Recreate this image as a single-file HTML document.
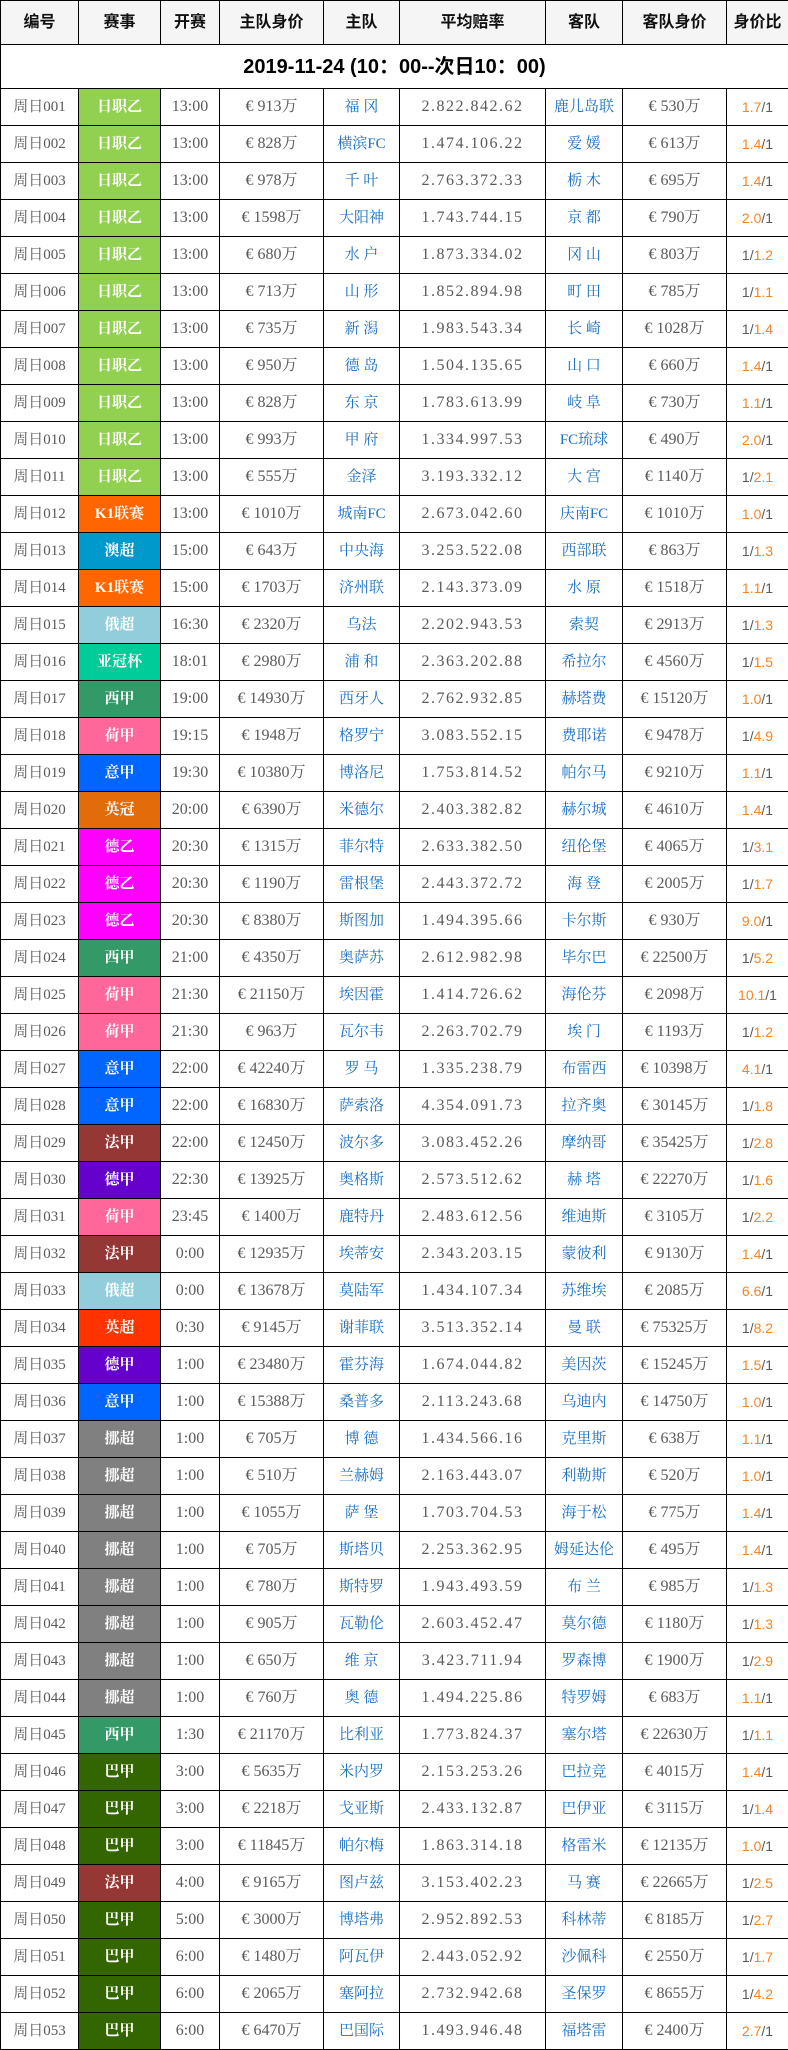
<!DOCTYPE html>
<html><head><meta charset="utf-8"><style>
body{margin:0;background:#fff;}
table{border-collapse:collapse;table-layout:fixed;width:788px;font-family:"Liberation Serif","Noto Serif CJK SC",serif;font-size:16px;}
td,th{border:1px solid #000;text-align:center;padding:0;height:36px;color:#5a5a5a;white-space:nowrap;overflow:hidden;line-height:20px;vertical-align:middle;}
th{height:43px;background:#f5f5f5;font-family:"Liberation Sans","Noto Sans CJK SC",sans-serif;font-weight:bold;color:#111;font-size:16px;}
tr.t td{height:43px;font-family:"Liberation Sans","Noto Sans CJK SC",sans-serif;font-weight:bold;color:#000;font-size:20px;}
td:nth-child(2){color:#fff;font-weight:bold;font-size:15px;}
td:nth-child(5),td:nth-child(7){color:#1a6fc4;font-size:15px;}
td:nth-child(6){letter-spacing:1.5px;font-size:16px;}
td:nth-child(9){font-family:"Liberation Sans",sans-serif;font-size:14px;}
td:nth-child(1){font-size:15px;}
b{font-weight:normal;color:#f7841f;}
.a{background:#92d050}.k{background:#ff6600}.au{background:#0099cc}.r{background:#92cddc}.y{background:#00cc99}
.x{background:#339966}.h{background:#ff6699}.i{background:#0066ff}.e{background:#e26b0a}.d2{background:#ff00ff}
.f{background:#953735}.d1{background:#6600cc}.p{background:#ff3300}.n{background:#808080}.b{background:#336600}
</style></head><body>
<table>
<colgroup><col style="width:78px"><col style="width:82px"><col style="width:59px"><col style="width:104px"><col style="width:76px"><col style="width:146px"><col style="width:77px"><col style="width:104px"><col style="width:62px"></colgroup>
<tr><th>编号</th><th>赛事</th><th>开赛</th><th>主队身价</th><th>主队</th><th>平均赔率</th><th>客队</th><th>客队身价</th><th>身价比</th></tr>
<tr class="t"><td colspan="9">2019-11-24 (10：00--次日10：00)</td></tr>
<tr><td>周日001</td><td class="a">日职乙</td><td>13:00</td><td>€ 913万</td><td>福 冈</td><td>2.822.842.62</td><td>鹿儿岛联</td><td>€ 530万</td><td><b>1.7</b>/1</td></tr>
<tr><td>周日002</td><td class="a">日职乙</td><td>13:00</td><td>€ 828万</td><td>横滨FC</td><td>1.474.106.22</td><td>爱 媛</td><td>€ 613万</td><td><b>1.4</b>/1</td></tr>
<tr><td>周日003</td><td class="a">日职乙</td><td>13:00</td><td>€ 978万</td><td>千 叶</td><td>2.763.372.33</td><td>栃 木</td><td>€ 695万</td><td><b>1.4</b>/1</td></tr>
<tr><td>周日004</td><td class="a">日职乙</td><td>13:00</td><td>€ 1598万</td><td>大阳神</td><td>1.743.744.15</td><td>京 都</td><td>€ 790万</td><td><b>2.0</b>/1</td></tr>
<tr><td>周日005</td><td class="a">日职乙</td><td>13:00</td><td>€ 680万</td><td>水 户</td><td>1.873.334.02</td><td>冈 山</td><td>€ 803万</td><td>1/<b>1.2</b></td></tr>
<tr><td>周日006</td><td class="a">日职乙</td><td>13:00</td><td>€ 713万</td><td>山 形</td><td>1.852.894.98</td><td>町 田</td><td>€ 785万</td><td>1/<b>1.1</b></td></tr>
<tr><td>周日007</td><td class="a">日职乙</td><td>13:00</td><td>€ 735万</td><td>新 潟</td><td>1.983.543.34</td><td>长 崎</td><td>€ 1028万</td><td>1/<b>1.4</b></td></tr>
<tr><td>周日008</td><td class="a">日职乙</td><td>13:00</td><td>€ 950万</td><td>德 岛</td><td>1.504.135.65</td><td>山 口</td><td>€ 660万</td><td><b>1.4</b>/1</td></tr>
<tr><td>周日009</td><td class="a">日职乙</td><td>13:00</td><td>€ 828万</td><td>东 京</td><td>1.783.613.99</td><td>岐 阜</td><td>€ 730万</td><td><b>1.1</b>/1</td></tr>
<tr><td>周日010</td><td class="a">日职乙</td><td>13:00</td><td>€ 993万</td><td>甲 府</td><td>1.334.997.53</td><td>FC琉球</td><td>€ 490万</td><td><b>2.0</b>/1</td></tr>
<tr><td>周日011</td><td class="a">日职乙</td><td>13:00</td><td>€ 555万</td><td>金泽</td><td>3.193.332.12</td><td>大 宫</td><td>€ 1140万</td><td>1/<b>2.1</b></td></tr>
<tr><td>周日012</td><td class="k">K1联赛</td><td>13:00</td><td>€ 1010万</td><td>城南FC</td><td>2.673.042.60</td><td>庆南FC</td><td>€ 1010万</td><td><b>1.0</b>/1</td></tr>
<tr><td>周日013</td><td class="au">澳超</td><td>15:00</td><td>€ 643万</td><td>中央海</td><td>3.253.522.08</td><td>西部联</td><td>€ 863万</td><td>1/<b>1.3</b></td></tr>
<tr><td>周日014</td><td class="k">K1联赛</td><td>15:00</td><td>€ 1703万</td><td>济州联</td><td>2.143.373.09</td><td>水 原</td><td>€ 1518万</td><td><b>1.1</b>/1</td></tr>
<tr><td>周日015</td><td class="r">俄超</td><td>16:30</td><td>€ 2320万</td><td>乌法</td><td>2.202.943.53</td><td>索契</td><td>€ 2913万</td><td>1/<b>1.3</b></td></tr>
<tr><td>周日016</td><td class="y">亚冠杯</td><td>18:01</td><td>€ 2980万</td><td>浦 和</td><td>2.363.202.88</td><td>希拉尔</td><td>€ 4560万</td><td>1/<b>1.5</b></td></tr>
<tr><td>周日017</td><td class="x">西甲</td><td>19:00</td><td>€ 14930万</td><td>西牙人</td><td>2.762.932.85</td><td>赫塔费</td><td>€ 15120万</td><td><b>1.0</b>/1</td></tr>
<tr><td>周日018</td><td class="h">荷甲</td><td>19:15</td><td>€ 1948万</td><td>格罗宁</td><td>3.083.552.15</td><td>费耶诺</td><td>€ 9478万</td><td>1/<b>4.9</b></td></tr>
<tr><td>周日019</td><td class="i">意甲</td><td>19:30</td><td>€ 10380万</td><td>博洛尼</td><td>1.753.814.52</td><td>帕尔马</td><td>€ 9210万</td><td><b>1.1</b>/1</td></tr>
<tr><td>周日020</td><td class="e">英冠</td><td>20:00</td><td>€ 6390万</td><td>米德尔</td><td>2.403.382.82</td><td>赫尔城</td><td>€ 4610万</td><td><b>1.4</b>/1</td></tr>
<tr><td>周日021</td><td class="d2">德乙</td><td>20:30</td><td>€ 1315万</td><td>菲尔特</td><td>2.633.382.50</td><td>纽伦堡</td><td>€ 4065万</td><td>1/<b>3.1</b></td></tr>
<tr><td>周日022</td><td class="d2">德乙</td><td>20:30</td><td>€ 1190万</td><td>雷根堡</td><td>2.443.372.72</td><td>海 登</td><td>€ 2005万</td><td>1/<b>1.7</b></td></tr>
<tr><td>周日023</td><td class="d2">德乙</td><td>20:30</td><td>€ 8380万</td><td>斯图加</td><td>1.494.395.66</td><td>卡尔斯</td><td>€ 930万</td><td><b>9.0</b>/1</td></tr>
<tr><td>周日024</td><td class="x">西甲</td><td>21:00</td><td>€ 4350万</td><td>奥萨苏</td><td>2.612.982.98</td><td>毕尔巴</td><td>€ 22500万</td><td>1/<b>5.2</b></td></tr>
<tr><td>周日025</td><td class="h">荷甲</td><td>21:30</td><td>€ 21150万</td><td>埃因霍</td><td>1.414.726.62</td><td>海伦芬</td><td>€ 2098万</td><td><b>10.1</b>/1</td></tr>
<tr><td>周日026</td><td class="h">荷甲</td><td>21:30</td><td>€ 963万</td><td>瓦尔韦</td><td>2.263.702.79</td><td>埃 门</td><td>€ 1193万</td><td>1/<b>1.2</b></td></tr>
<tr><td>周日027</td><td class="i">意甲</td><td>22:00</td><td>€ 42240万</td><td>罗 马</td><td>1.335.238.79</td><td>布雷西</td><td>€ 10398万</td><td><b>4.1</b>/1</td></tr>
<tr><td>周日028</td><td class="i">意甲</td><td>22:00</td><td>€ 16830万</td><td>萨索洛</td><td>4.354.091.73</td><td>拉齐奥</td><td>€ 30145万</td><td>1/<b>1.8</b></td></tr>
<tr><td>周日029</td><td class="f">法甲</td><td>22:00</td><td>€ 12450万</td><td>波尔多</td><td>3.083.452.26</td><td>摩纳哥</td><td>€ 35425万</td><td>1/<b>2.8</b></td></tr>
<tr><td>周日030</td><td class="d1">德甲</td><td>22:30</td><td>€ 13925万</td><td>奥格斯</td><td>2.573.512.62</td><td>赫 塔</td><td>€ 22270万</td><td>1/<b>1.6</b></td></tr>
<tr><td>周日031</td><td class="h">荷甲</td><td>23:45</td><td>€ 1400万</td><td>鹿特丹</td><td>2.483.612.56</td><td>维迪斯</td><td>€ 3105万</td><td>1/<b>2.2</b></td></tr>
<tr><td>周日032</td><td class="f">法甲</td><td>0:00</td><td>€ 12935万</td><td>埃蒂安</td><td>2.343.203.15</td><td>蒙彼利</td><td>€ 9130万</td><td><b>1.4</b>/1</td></tr>
<tr><td>周日033</td><td class="r">俄超</td><td>0:00</td><td>€ 13678万</td><td>莫陆军</td><td>1.434.107.34</td><td>苏维埃</td><td>€ 2085万</td><td><b>6.6</b>/1</td></tr>
<tr><td>周日034</td><td class="p">英超</td><td>0:30</td><td>€ 9145万</td><td>谢菲联</td><td>3.513.352.14</td><td>曼 联</td><td>€ 75325万</td><td>1/<b>8.2</b></td></tr>
<tr><td>周日035</td><td class="d1">德甲</td><td>1:00</td><td>€ 23480万</td><td>霍芬海</td><td>1.674.044.82</td><td>美因茨</td><td>€ 15245万</td><td><b>1.5</b>/1</td></tr>
<tr><td>周日036</td><td class="i">意甲</td><td>1:00</td><td>€ 15388万</td><td>桑普多</td><td>2.113.243.68</td><td>乌迪内</td><td>€ 14750万</td><td><b>1.0</b>/1</td></tr>
<tr><td>周日037</td><td class="n">挪超</td><td>1:00</td><td>€ 705万</td><td>博 德</td><td>1.434.566.16</td><td>克里斯</td><td>€ 638万</td><td><b>1.1</b>/1</td></tr>
<tr><td>周日038</td><td class="n">挪超</td><td>1:00</td><td>€ 510万</td><td>兰赫姆</td><td>2.163.443.07</td><td>利勒斯</td><td>€ 520万</td><td><b>1.0</b>/1</td></tr>
<tr><td>周日039</td><td class="n">挪超</td><td>1:00</td><td>€ 1055万</td><td>萨 堡</td><td>1.703.704.53</td><td>海于松</td><td>€ 775万</td><td><b>1.4</b>/1</td></tr>
<tr><td>周日040</td><td class="n">挪超</td><td>1:00</td><td>€ 705万</td><td>斯塔贝</td><td>2.253.362.95</td><td>姆延达伦</td><td>€ 495万</td><td><b>1.4</b>/1</td></tr>
<tr><td>周日041</td><td class="n">挪超</td><td>1:00</td><td>€ 780万</td><td>斯特罗</td><td>1.943.493.59</td><td>布 兰</td><td>€ 985万</td><td>1/<b>1.3</b></td></tr>
<tr><td>周日042</td><td class="n">挪超</td><td>1:00</td><td>€ 905万</td><td>瓦勒伦</td><td>2.603.452.47</td><td>莫尔德</td><td>€ 1180万</td><td>1/<b>1.3</b></td></tr>
<tr><td>周日043</td><td class="n">挪超</td><td>1:00</td><td>€ 650万</td><td>维 京</td><td>3.423.711.94</td><td>罗森博</td><td>€ 1900万</td><td>1/<b>2.9</b></td></tr>
<tr><td>周日044</td><td class="n">挪超</td><td>1:00</td><td>€ 760万</td><td>奥 德</td><td>1.494.225.86</td><td>特罗姆</td><td>€ 683万</td><td><b>1.1</b>/1</td></tr>
<tr><td>周日045</td><td class="x">西甲</td><td>1:30</td><td>€ 21170万</td><td>比利亚</td><td>1.773.824.37</td><td>塞尔塔</td><td>€ 22630万</td><td>1/<b>1.1</b></td></tr>
<tr><td>周日046</td><td class="b">巴甲</td><td>3:00</td><td>€ 5635万</td><td>米内罗</td><td>2.153.253.26</td><td>巴拉竞</td><td>€ 4015万</td><td><b>1.4</b>/1</td></tr>
<tr><td>周日047</td><td class="b">巴甲</td><td>3:00</td><td>€ 2218万</td><td>戈亚斯</td><td>2.433.132.87</td><td>巴伊亚</td><td>€ 3115万</td><td>1/<b>1.4</b></td></tr>
<tr><td>周日048</td><td class="b">巴甲</td><td>3:00</td><td>€ 11845万</td><td>帕尔梅</td><td>1.863.314.18</td><td>格雷米</td><td>€ 12135万</td><td><b>1.0</b>/1</td></tr>
<tr><td>周日049</td><td class="f">法甲</td><td>4:00</td><td>€ 9165万</td><td>图卢兹</td><td>3.153.402.23</td><td>马 赛</td><td>€ 22665万</td><td>1/<b>2.5</b></td></tr>
<tr><td>周日050</td><td class="b">巴甲</td><td>5:00</td><td>€ 3000万</td><td>博塔弗</td><td>2.952.892.53</td><td>科林蒂</td><td>€ 8185万</td><td>1/<b>2.7</b></td></tr>
<tr><td>周日051</td><td class="b">巴甲</td><td>6:00</td><td>€ 1480万</td><td>阿瓦伊</td><td>2.443.052.92</td><td>沙佩科</td><td>€ 2550万</td><td>1/<b>1.7</b></td></tr>
<tr><td>周日052</td><td class="b">巴甲</td><td>6:00</td><td>€ 2065万</td><td>塞阿拉</td><td>2.732.942.68</td><td>圣保罗</td><td>€ 8655万</td><td>1/<b>4.2</b></td></tr>
<tr><td>周日053</td><td class="b">巴甲</td><td>6:00</td><td>€ 6470万</td><td>巴国际</td><td>1.493.946.48</td><td>福塔雷</td><td>€ 2400万</td><td><b>2.7</b>/1</td></tr>
</table>
</body></html>
